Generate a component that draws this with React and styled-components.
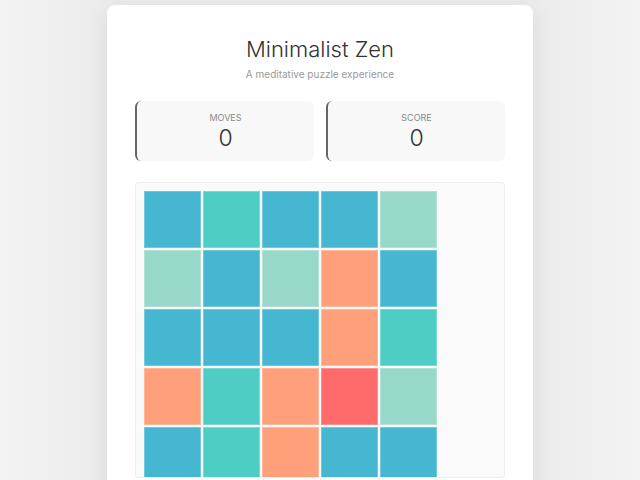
import styled, { createGlobalStyle } from "styled-components";

const GlobalStyle = createGlobalStyle`
    html, body {
        margin: 0;
        padding: 0;
        background: #f0f0f0;
        font-family: Inter, "Liberation Sans", sans-serif;
    }
`;

const COLORS = {
    b: "#45B7D1",
    t: "#4ECDC4",
    m: "#98D8C8",
    s: "#FFA07A",
    r: "#FF6B6B",
};

const BOARD = [
    ["b", "t", "b", "b", "m"],
    ["m", "b", "m", "s", "b"],
    ["b", "b", "b", "s", "t"],
    ["s", "t", "s", "r", "m"],
    ["b", "t", "s", "b", "b"],
];

const Page = styled.div`
    height: 480px;
    overflow: hidden;
    display: flex;
    justify-content: center;
    padding-top: 5px;
    box-sizing: border-box;
    background: linear-gradient(90deg, #f3f3f3 0%, #ebebeb 18%, #ebebeb 82%, #f3f3f3 100%);
`;

const Card = styled.div`
    width: 426px;
    height: 520px;
    flex-shrink: 0;
    box-sizing: border-box;
    background: #ffffff;
    border-radius: 8px;
    padding: 30px 28px 0;
    box-shadow: 0 4px 24px rgba(0, 0, 0, 0.07);
    display: flex;
    flex-direction: column;
`;

const Title = styled.h1`
    margin: 0;
    text-align: center;
    font-size: 22px;
    line-height: 28px;
    font-weight: 300;
    color: #333;
`;

const Subtitle = styled.p`
    margin: 4px 0 0;
    text-align: center;
    font-size: 10px;
    line-height: 14px;
    color: #999;
`;

const Stats = styled.div`
    display: grid;
    grid-template-columns: 1fr 1fr;
    gap: 12px;
    margin-top: 20px;
`;

const Stat = styled.div`
    height: 60px;
    background: #f8f8f8;
    border-radius: 6px;
    border-left: 2px solid #666;
    display: flex;
    flex-direction: column;
    align-items: center;
    justify-content: center;
    gap: 3px;
`;

const StatLabel = styled.div`
    font-size: 9px;
    line-height: 11px;
    text-transform: uppercase;
    color: #888;
`;

const StatValue = styled.div`
    font-size: 23px;
    line-height: 24px;
    font-weight: 300;
    color: #333;
`;

const Board = styled.div`
    margin-top: 21px;
    box-sizing: border-box;
    height: 296px;
    overflow: hidden;
    background: #fafafa;
    border: 1px solid #eeeeee;
    border-radius: 4px;
    padding: 8px;
`;

const Grid = styled.div`
    display: grid;
    grid-template-columns: repeat(5, 57px);
    grid-auto-rows: 57px;
    gap: 2px;
`;

const Tile = styled.div`
    box-sizing: border-box;
    background: ${(p) => p.$color};
    border: 1px solid rgba(255, 255, 255, 0.25);
`;

export default function App() {
    return (
        <>
            <GlobalStyle />
            <Page>
                <Card>
                    <Title>Minimalist Zen</Title>
                    <Subtitle>A meditative puzzle experience</Subtitle>
                    <Stats>
                        <Stat>
                            <StatLabel>Moves</StatLabel>
                            <StatValue>0</StatValue>
                        </Stat>
                        <Stat>
                            <StatLabel>Score</StatLabel>
                            <StatValue>0</StatValue>
                        </Stat>
                    </Stats>
                    <Board>
                        <Grid>
                            {BOARD.flat().map((c, i) => (
                                <Tile key={i} $color={COLORS[c]} />
                            ))}
                        </Grid>
                    </Board>
                </Card>
            </Page>
        </>
    );
}
